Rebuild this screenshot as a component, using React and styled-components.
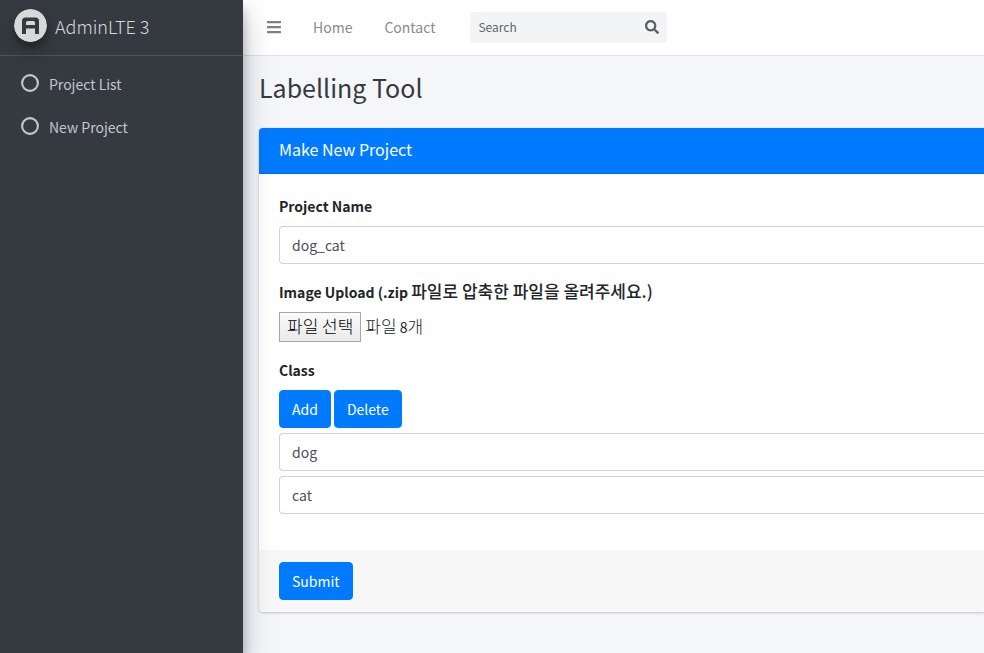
import React, { useState } from "react";
import styled, { createGlobalStyle } from "styled-components";
import { FaBars, FaSearch } from "react-icons/fa";

const GlobalStyle = createGlobalStyle`
  *, *::before, *::after { box-sizing: border-box; }
  body {
    margin: 0;
    background: #f4f6f9;
    color: #212529;
    font-family: "Noto Sans CJK KR", "Noto Sans", sans-serif;
    font-size: 14px;
    line-height: 24px;
    overflow-x: hidden;
  }
  button, input { font: inherit; }
`;

const Layout = styled.div`
  display: flex;
  min-height: 100vh;
`;

const Sidebar = styled.aside`
  position: relative;
  z-index: 2;
  flex: 0 0 243px;
  background: #343a40;
  box-shadow: 0 14px 28px rgba(0, 0, 0, 0.25), 0 10px 10px rgba(0, 0, 0, 0.22);
`;

const Brand = styled.a`
  display: flex;
  align-items: center;
  gap: 8px;
  height: 56px;
  padding: 0 14px 4px;
  border-bottom: 1px solid #4b545c;
  color: #d6d8d9;
  font-size: 18px;
  font-weight: 300;
  text-decoration: none;
`;

const Logo = styled.svg`
  width: 33px;
  height: 33px;
  border-radius: 50%;
  box-shadow: 0 10px 20px rgba(0, 0, 0, 0.19), 0 6px 6px rgba(0, 0, 0, 0.23);
`;

const SideNav = styled.nav`
  display: flex;
  flex-direction: column;
  gap: 3px;
  padding: 8px 5px;
`;

const SideLink = styled.a`
  display: flex;
  align-items: center;
  gap: 10px;
  height: 40px;
  padding: 0 16px;
  color: #c2c7d0;
  text-decoration: none;
`;

const Ring = styled.svg`
  width: 18px;
  height: 18px;
  margin-bottom: 2px;
`;

const Content = styled.div`
  flex: 1;
  min-width: 0;
`;

const Navbar = styled.header`
  display: flex;
  align-items: center;
  height: 56px;
  padding: 0 8px 1px;
  background: #fff;
  border-bottom: 1px solid #dee2e6;
`;

const MenuButton = styled.button`
  display: flex;
  padding: 12px 16px;
  border: 0;
  background: none;
  color: #808080;

  svg { width: 14px; height: 16px; }
`;

const NavLink = styled.a`
  padding: 8px 16px;
  color: #8a8a8a;
  text-decoration: none;
`;

const SearchForm = styled.form`
  display: flex;
  width: 197px;
  height: 31px;
  margin-left: 19px;
  border-radius: 3px;
  background: #f2f4f6;
`;

const SearchInput = styled.input`
  flex: 1;
  min-width: 0;
  padding: 0 8px;
  border: 0;
  background: none;
  font-size: 12px;

  &::placeholder { color: #606468; opacity: 1; }
`;

const SearchButton = styled.button`
  display: flex;
  align-items: center;
  padding: 0 8px;
  border: 0;
  background: none;
  color: #5a5d61;
`;

const Main = styled.main`
  padding: 14px 0 40px 16px;
`;

const Title = styled.h1`
  margin: 0 0 23px;
  color: #343a40;
  font-size: 25px;
  font-weight: 400;
  line-height: 35px;
`;

const Card = styled.section`
  border-radius: 4px 0 0 4px;
  background: #fff;
  box-shadow: 0 0 1px rgba(0, 0, 0, 0.125), 0 1px 3px rgba(0, 0, 0, 0.2);
`;

const CardTitle = styled.h2`
  height: 46px;
  margin: 0;
  padding: 9px 20px;
  border-bottom: 1px solid #006fe6;
  border-radius: 4px 0 0 0;
  background: #007bff;
  color: #fff;
  font-size: 16px;
  font-weight: 400;
`;

const CardBody = styled.div`
  padding: 20px 0 36px 20px;
`;

const CardFooter = styled.div`
  padding: 12px 20px;
  border-radius: 0 0 0 4px;
  background: #f7f7f7;
`;

const Group = styled.div`
  margin-bottom: ${(p) => (p.$last ? 0 : 16)}px;
`;

const FieldLabel = styled.label`
  display: block;
  margin-bottom: 8px;
  font-weight: 700;
`;

const Legend = styled.div`
  margin-bottom: 8px;
  font-weight: 700;
`;

const Korean = styled.span`
  font-size: 17px;
  font-weight: ${(p) => (p.$medium ? 500 : 300)};
  line-height: 1;
`;

const TextField = styled.input`
  display: block;
  width: 100%;
  height: 38px;
  padding: 6px 12px;
  border: 1px solid #ced4da;
  border-right: 0;
  border-radius: 4px 0 0 4px;
  background: #fff;
  color: #495057;
`;

const ClassList = styled.div`
  display: flex;
  flex-direction: column;
  gap: 5px;
  margin-top: 5px;
`;

const FileRow = styled.div`
  display: flex;
  align-items: center;
  gap: 4px;
  height: 30px;
  color: #212529;
`;

const HiddenFile = styled.input`
  position: absolute;
  width: 1px;
  height: 1px;
  overflow: hidden;
  clip-path: inset(50%);
`;

const FileButton = styled.label`
  height: 30px;
  padding: 2px 7px;
  border: 1px solid #a6a6a6;
  background: linear-gradient(#fafafa, #eaeaea);
  color: #000;
`;

const ButtonRow = styled.div`
  display: flex;
  gap: 3px;
`;

const Button = styled.button`
  height: 38px;
  padding: 6px 12px;
  border: 1px solid #007bff;
  border-radius: 4px;
  background: #007bff;
  color: #fff;
`;

const BrandLogo = () => (
  <Logo viewBox="0 0 33 33" aria-hidden="true">
    <circle cx="16.5" cy="16.5" r="16.5" fill="#d7d8d9" />
    <path
      d="M8 25V12q0-3.500 3.500-3.500h10q3.500 0 3.500 3.500v13h-4v-5.500h-9V25zM12 16h9v-2.500q0-1.500-1.500-1.500h-6q-1.500 0-1.500 1.500z"
      fill="#343a40"
      fillRule="evenodd"
    />
  </Logo>
);

const RingIcon = () => (
  <Ring viewBox="0 0 18 18" aria-hidden="true">
    <circle cx="9" cy="9" r="7.900" fill="none" stroke="currentColor" strokeWidth="2.100" />
  </Ring>
);

export default function App() {
  const [classes, setClasses] = useState(["dog", "cat"]);
  const rename = (index, value) =>
    setClasses(classes.map((name, i) => (i === index ? value : name)));

  return (
    <>
      <GlobalStyle />
      <Layout>
        <Sidebar>
          <Brand href="#">
            <BrandLogo />
            AdminLTE 3
          </Brand>
          <SideNav>
            <SideLink href="#projects"><RingIcon />Project List</SideLink>
            <SideLink href="#new"><RingIcon />New Project</SideLink>
          </SideNav>
        </Sidebar>
        <Content>
          <Navbar>
            <MenuButton type="button" aria-label="Toggle menu"><FaBars /></MenuButton>
            <NavLink href="#home">Home</NavLink>
            <NavLink href="#contact">Contact</NavLink>
            <SearchForm role="search">
              <SearchInput type="search" placeholder="Search" aria-label="Search" />
              <SearchButton type="button" aria-label="Submit search"><FaSearch size={14} /></SearchButton>
            </SearchForm>
          </Navbar>
          <Main>
            <Title>Labelling Tool</Title>
            <Card>
              <CardTitle>Make New Project</CardTitle>
              <form onSubmit={(e) => e.preventDefault()}>
                <CardBody>
                  <Group>
                    <FieldLabel htmlFor="project-name">Project Name</FieldLabel>
                    <TextField id="project-name" type="text" defaultValue="dog_cat" />
                  </Group>
                  <Group>
                    <FieldLabel htmlFor="images">
                      Image Upload (.zip <Korean $medium>파일로 압축한 파일을 올려주세요.)</Korean>
                    </FieldLabel>
                    <FileRow>
                      <HiddenFile id="images" type="file" multiple />
                      <FileButton htmlFor="images"><Korean>파일 선택</Korean></FileButton>
                      <span><Korean>파일</Korean> 8<Korean>개</Korean></span>
                    </FileRow>
                  </Group>
                  <Group $last>
                    <Legend>Class</Legend>
                    <ButtonRow>
                      <Button type="button" onClick={() => setClasses([...classes, ""])}>Add</Button>
                      <Button type="button" onClick={() => setClasses(classes.slice(0, -1))}>Delete</Button>
                    </ButtonRow>
                    <ClassList>
                      {classes.map((name, i) => (
                        <TextField
                          key={i}
                          type="text"
                          aria-label={`Class ${i + 1}`}
                          value={name}
                          onChange={(e) => rename(i, e.target.value)}
                        />
                      ))}
                    </ClassList>
                  </Group>
                </CardBody>
                <CardFooter>
                  <Button type="submit">Submit</Button>
                </CardFooter>
              </form>
            </Card>
          </Main>
        </Content>
      </Layout>
    </>
  );
}
